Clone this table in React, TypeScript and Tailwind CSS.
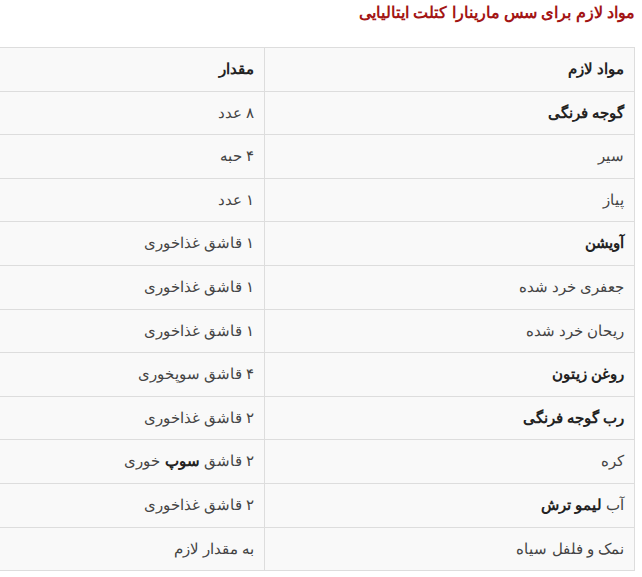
import React from 'react';

type Part = { t: string; b?: boolean };
type Row = { name: Part[]; amount: Part[] };

const rows: Row[] = [
  { name: [{ t: 'گوجه فرنگی', b: true }], amount: [{ t: '۸ عدد' }] },
  { name: [{ t: 'سیر' }], amount: [{ t: '۴ حبه' }] },
  { name: [{ t: 'پیاز' }], amount: [{ t: '۱ عدد' }] },
  { name: [{ t: 'آویشن', b: true }], amount: [{ t: '۱ قاشق غذاخوری' }] },
  { name: [{ t: 'جعفری خرد شده' }], amount: [{ t: '۱ قاشق غذاخوری' }] },
  { name: [{ t: 'ریحان خرد شده' }], amount: [{ t: '۱ قاشق غذاخوری' }] },
  { name: [{ t: 'روغن زیتون', b: true }], amount: [{ t: '۴ قاشق سوپخوری' }] },
  { name: [{ t: 'رب گوجه فرنگی', b: true }], amount: [{ t: '۲ قاشق غذاخوری' }] },
  { name: [{ t: 'کره' }], amount: [{ t: '۲ قاشق ' }, { t: 'سوپ', b: true }, { t: ' خوری' }] },
  { name: [{ t: 'آب ' }, { t: 'لیمو ترش', b: true }], amount: [{ t: '۲ قاشق غذاخوری' }] },
  { name: [{ t: 'نمک و فلفل سیاه' }], amount: [{ t: 'به مقدار لازم' }] },
];

function Cell({ parts, wide }: { parts: Part[]; wide?: boolean }) {
  return (
    <div
      className={
        'flex items-center px-[10px] h-[43.6px] border-b border-[#dddddd] ' +
        (wide ? 'w-[370px] border-l border-[#dddddd]' : 'flex-1')
      }
    >
      <span className="whitespace-pre">
        {parts.map((p, i) =>
          p.b ? (
            <b key={i} className="font-bold text-[#222]">
              {p.t}
            </b>
          ) : (
            <span key={i}>{p.t}</span>
          )
        )}
      </span>
    </div>
  );
}

export default function App() {
  return (
    <div
      dir="rtl"
      className="w-[642px] h-[577px] bg-white pr-[7px] overflow-hidden text-[#444] text-[15px]"
      style={{ fontFamily: '"Liberation Sans", sans-serif' }}
    >
      <h2 className="text-[15.5px] font-bold text-[#a31515] leading-[26px] h-[47px]">
        مواد لازم برای سس مارینارا کتلت ایتالیایی
      </h2>
      <div className="bg-[#f9f9f9] border-t border-r border-[#dddddd]">
        <div className="flex">
          <Cell wide parts={[{ t: 'مواد لازم', b: true }]} />
          <Cell parts={[{ t: 'مقدار', b: true }]} />
        </div>
        {rows.map((r, i) => (
          <div key={i} className="flex">
            <Cell wide parts={r.name} />
            <Cell parts={r.amount} />
          </div>
        ))}
      </div>
    </div>
  );
}
